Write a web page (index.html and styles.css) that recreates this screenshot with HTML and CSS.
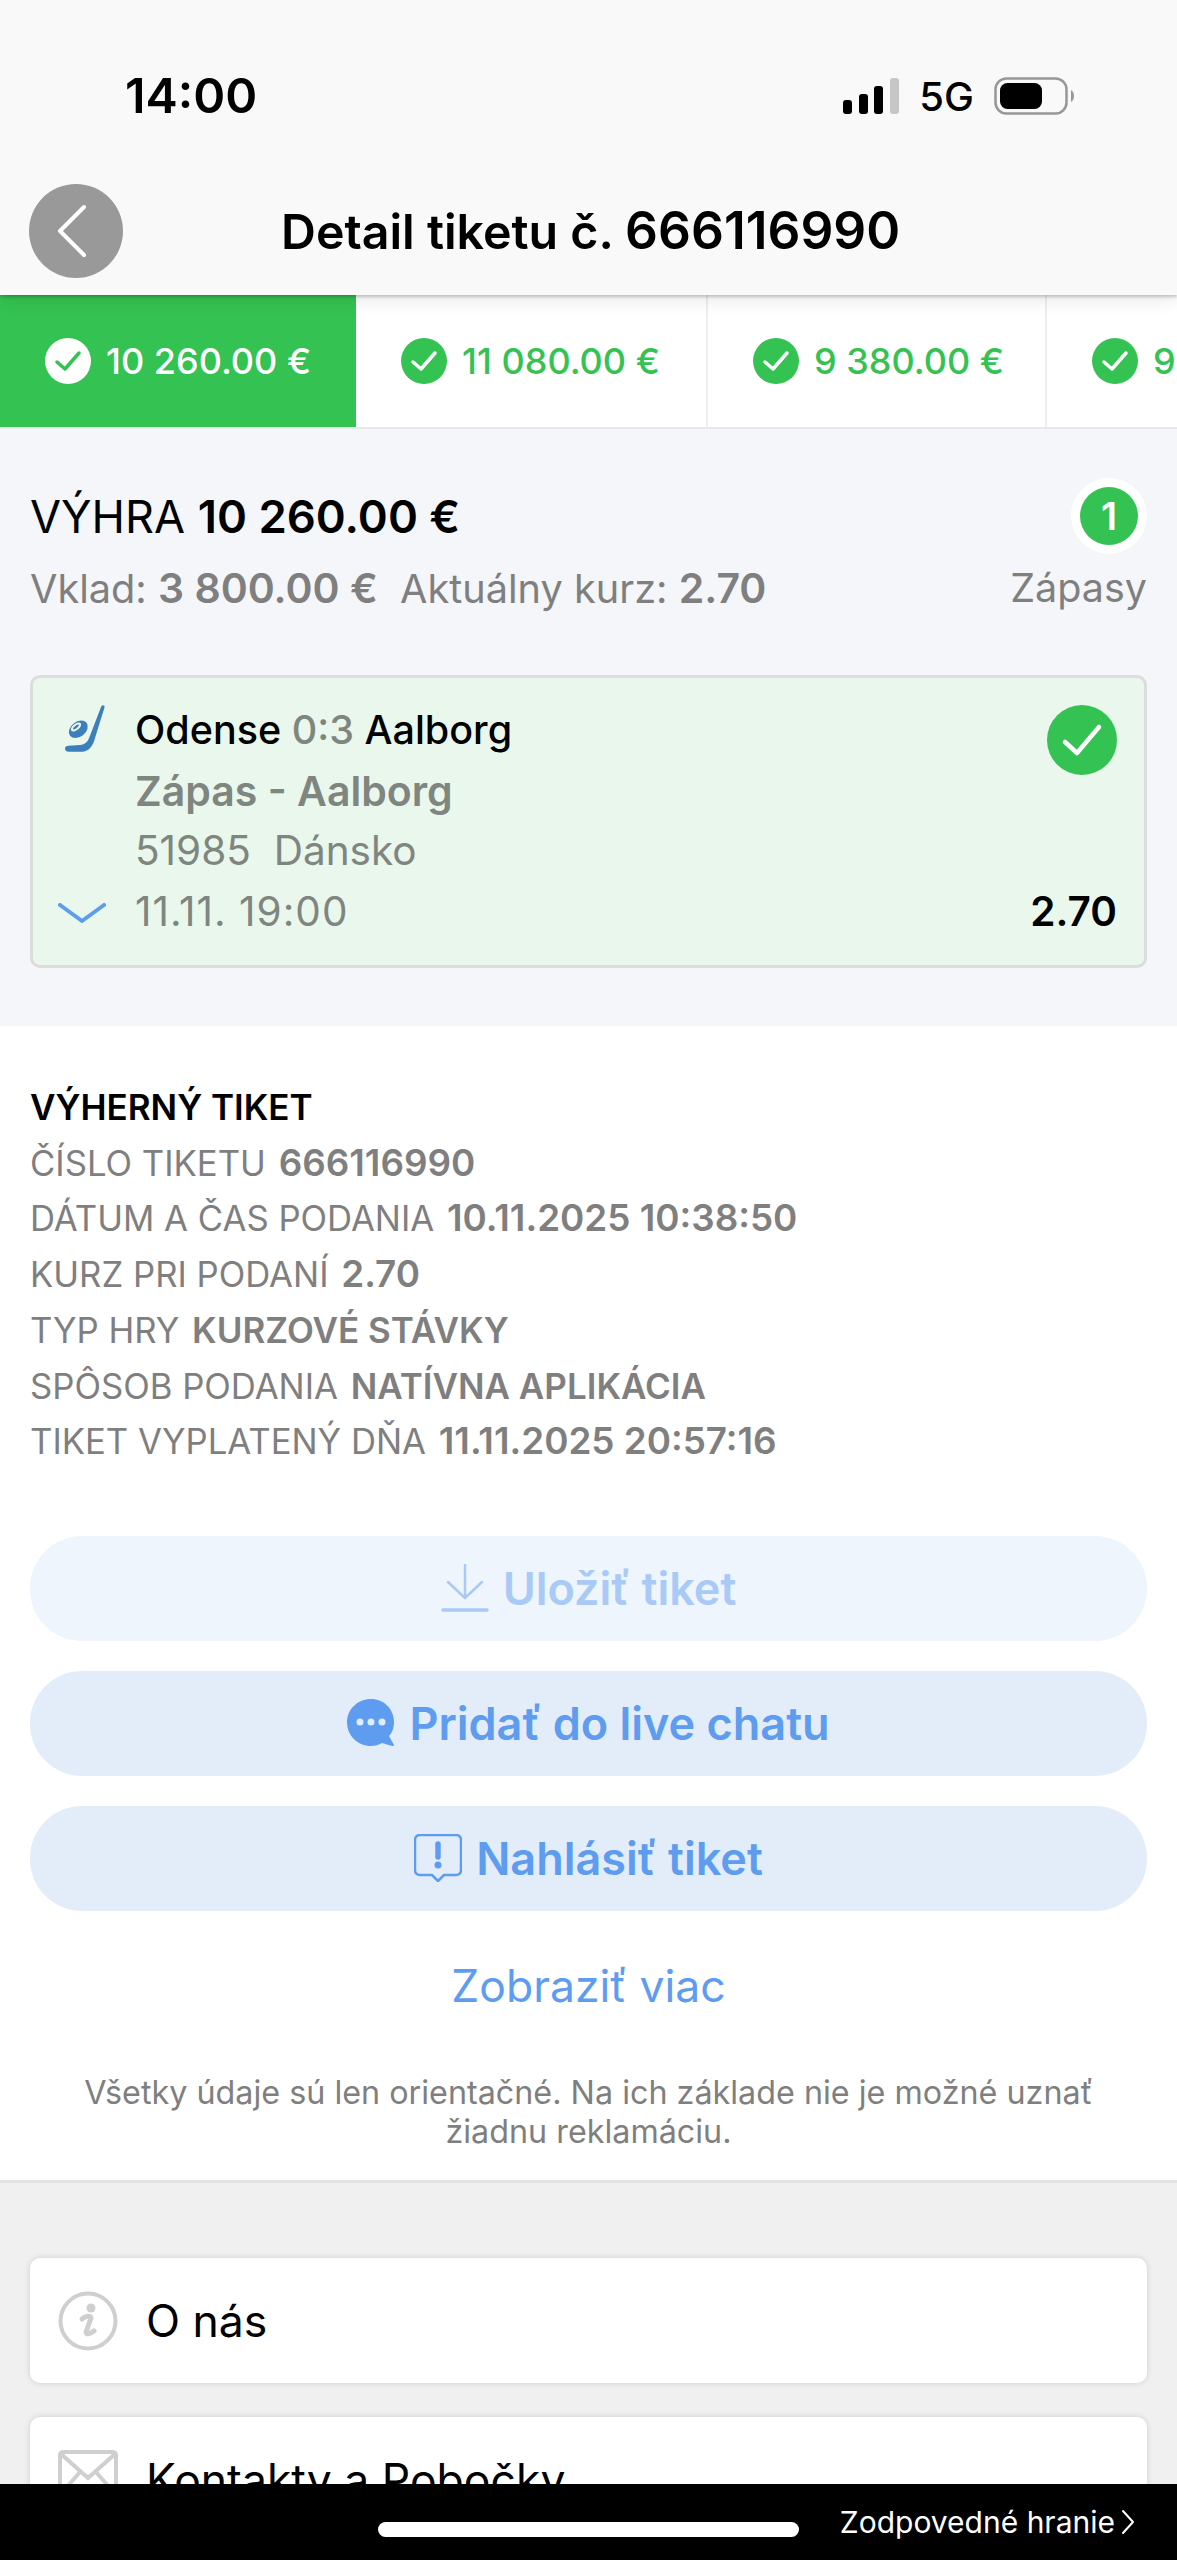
FILE: index.html
```html
<!DOCTYPE html>
<html lang="sk">
<head>
    <meta charset="UTF-8">
    <meta name="viewport" content="width=device-width, initial-scale=1.0">
    <title>Detail tiketu</title>
    <link rel="stylesheet" href="styles.css">
</head>
<body>
    <header class="top">
        <div class="status">
            <span class="time">14:00</span>
            <div class="status-right">
                <svg class="signal" width="56" height="36" viewBox="0 0 56 36">
                    <rect x="0" y="22" width="9" height="14" rx="3" fill="#000"/>
                    <rect x="16" y="16" width="9" height="20" rx="3" fill="#000"/>
                    <rect x="31" y="8" width="9" height="28" rx="3" fill="#000"/>
                    <rect x="47" y="0" width="9" height="36" rx="3" fill="#c6c6c6"/>
                </svg>
                <span class="net">5G</span>
                <svg class="battery" width="82" height="38" viewBox="0 0 82 38">
                    <rect x="1.5" y="1.5" width="71" height="35" rx="11" fill="none" stroke="#979797" stroke-width="2.5"/>
                    <rect x="6" y="6" width="42" height="26" rx="7.5" fill="#000"/>
                    <path d="M77 13 C81 15 81 23 77 25 Z" fill="#979797"/>
                </svg>
            </div>
        </div>
        <div class="nav">
            <button class="back">
                <svg width="94" height="94" viewBox="0 0 94 94"><path d="M55 23 L31 47 L55 71" fill="none" stroke="#fff" stroke-width="4" stroke-linecap="round" stroke-linejoin="round"/></svg>
            </button>
            <h1>Detail tiketu č. <span class="ticket-no">666116990</span></h1>
        </div>
    </header>

    <nav class="tabs">
        <div class="tab tab-active" style="width:356px">
            <svg class="tab-check" width="46" height="46" viewBox="0 0 46 46"><circle cx="23" cy="23" r="23" fill="#fff"/><path d="M12 24 L20 31 L34 15" fill="none" stroke="#34c252" stroke-width="3.5" stroke-linecap="round" stroke-linejoin="round"/></svg>
            <span>10 260.00 €</span>
        </div>
        <div class="tab" style="width:352px">
            <svg class="tab-check" width="46" height="46" viewBox="0 0 46 46"><circle cx="23" cy="23" r="23" fill="#34c252"/><path d="M12 24 L20 31 L34 15" fill="none" stroke="#fff" stroke-width="3.5" stroke-linecap="round" stroke-linejoin="round"/></svg>
            <span>11 080.00 €</span>
        </div>
        <div class="tab" style="width:339px">
            <svg class="tab-check" width="46" height="46" viewBox="0 0 46 46"><circle cx="23" cy="23" r="23" fill="#34c252"/><path d="M12 24 L20 31 L34 15" fill="none" stroke="#fff" stroke-width="3.5" stroke-linecap="round" stroke-linejoin="round"/></svg>
            <span>9 380.00 €</span>
        </div>
        <div class="tab" style="width:339px">
            <svg class="tab-check" width="46" height="46" viewBox="0 0 46 46"><circle cx="23" cy="23" r="23" fill="#34c252"/><path d="M12 24 L20 31 L34 15" fill="none" stroke="#fff" stroke-width="3.5" stroke-linecap="round" stroke-linejoin="round"/></svg>
            <span>9 380.00 €</span>
        </div>
    </nav>

    <section class="summary">
        <div class="win-row">
            <div>
                <div class="win">VÝHRA <b>10 260.00 €</b></div>
                <div class="stake">Vklad: <b>3 800.00 €</b>&nbsp; Aktuálny kurz: <b>2.70</b></div>
            </div>
            <div class="matches">
                <span class="count">1</span>
                <span>Zápasy</span>
            </div>
        </div>

        <div class="match">
            <div class="match-icons">
                <svg class="stick" width="40" height="47" viewBox="0 0 40 47">
                    <path d="M37 0.5 C38.5 0 40 1 39.5 2.5 L30 33 C28 41 24 46.5 17 46.7 L4 46.7 C1 46.7 0 45 0 43.5 C0 41.5 1.5 41 3.5 40.8 L15 40 C20 39.5 23 36.5 24.5 32 L36 2 Z" fill="#3d7fbc"/>
                    <ellipse cx="13.3" cy="24.3" rx="10.5" ry="7.5" transform="rotate(-38 13.3 24.3)" fill="#3d7fbc"/>
                    <ellipse cx="11" cy="22" rx="6" ry="3.2" transform="rotate(-38 11 22)" fill="#eaf7ed"/>
                    <ellipse cx="11" cy="22" rx="3.5" ry="1.2" transform="rotate(-38 11 22)" fill="#3d7fbc"/>
                </svg>
                <svg width="48" height="20" viewBox="0 0 48 20"><path d="M2 2 L24 18 L46 2" fill="none" stroke="#5e9cf0" stroke-width="4" stroke-linecap="round" stroke-linejoin="round"/></svg>
            </div>
            <div class="match-body">
                <div class="teams">Odense <span class="score">0:3</span> Aalborg</div>
                <div class="pick">Zápas - Aalborg</div>
                <div class="meta">51985&nbsp; Dánsko</div>
                <div class="meta meta-date">11.11. 19:00</div>
            </div>
            <div class="match-side">
                <svg width="70" height="70" viewBox="0 0 70 70"><circle cx="35" cy="35" r="35" fill="#34c252"/><path d="M18 37 L30 48 L52 22" fill="none" stroke="#fff" stroke-width="4.5" stroke-linecap="round" stroke-linejoin="round"/></svg>
                <div class="odds">2.70</div>
            </div>
        </div>
    </section>

    <section class="details">
        <div class="info">
            <div class="info-title">VÝHERNÝ TIKET</div>
            <div>ČÍSLO TIKETU <b>666116990</b></div>
            <div>DÁTUM A ČAS PODANIA <b>10.11.2025 10:38:50</b></div>
            <div>KURZ PRI PODANÍ <b>2.70</b></div>
            <div>TYP HRY <b class="caps">KURZOVÉ STÁVKY</b></div>
            <div>SPÔSOB PODANIA <b class="caps">NATÍVNA APLIKÁCIA</b></div>
            <div>TIKET VYPLATENÝ DŇA <b>11.11.2025 20:57:16</b></div>
        </div>

        <div class="actions">
            <button class="action action-off">
                <svg width="48" height="48" viewBox="0 0 48 48"><path d="M24 1 V33 M7 18 L24 34 L41 18" fill="none" stroke="#a9caf6" stroke-width="2.5" stroke-linecap="round" stroke-linejoin="round"/><path d="M2 46 H46" stroke="#a9caf6" stroke-width="3.5" stroke-linecap="round"/></svg>
                Uložiť tiket
            </button>
            <button class="action">
                <svg width="48" height="48" viewBox="0 0 48 48"><path d="M24 0 C37 0 47 10 47 23 C47 29 45 34 42 37 L47 46 C47 47 46 47 45 47 L35 44 C32 46 28 47 24 47 C11 47 0 37 0 23 C0 10 11 0 24 0 Z" fill="#5e9cf0"/><circle cx="13" cy="23" r="3.5" fill="#e3edfa"/><circle cx="24" cy="23" r="3.5" fill="#e3edfa"/><circle cx="35" cy="23" r="3.5" fill="#e3edfa"/></svg>
                Pridať do live chatu
            </button>
            <button class="action">
                <svg width="48" height="48" viewBox="0 0 48 48"><path d="M6 1 H42 C45 1 47 3 47 6 V36 C47 39 45 41 42 41 H30 L24 47 L18 41 H6 C3 41 1 39 1 36 V6 C1 3 3 1 6 1 Z" fill="none" stroke="#5e9cf0" stroke-width="2.5" stroke-linejoin="round"/><path d="M24 10 V23" stroke="#5e9cf0" stroke-width="5.5" stroke-linecap="round"/><circle cx="24" cy="31" r="3.5" fill="#5e9cf0"/></svg>
                Nahlásiť tiket
            </button>
        </div>

        <div class="more">Zobraziť viac</div>
        <p class="note">Všetky údaje sú len orientačné. Na ich základe nie je možné uznať žiadnu reklamáciu.</p>
    </section>

    <section class="menu">
        <div class="menu-row">
            <svg width="60" height="60" viewBox="0 0 60 60"><circle cx="30" cy="30" r="27.5" fill="none" stroke="#cfcfcf" stroke-width="4"/><circle cx="33" cy="17" r="4.5" fill="#cfcfcf"/><path d="M24 28 C27 25 33 24 33 27 L28 41 C28 44 32 43 36 40" fill="none" stroke="#cfcfcf" stroke-width="5" stroke-linecap="round" stroke-linejoin="round"/></svg>
            <span>O nás</span>
        </div>
        <div class="menu-row">
            <svg width="60" height="60" viewBox="0 0 60 60"><rect x="2" y="2" width="56" height="44" rx="3" fill="none" stroke="#cfcfcf" stroke-width="4"/><path d="M3 4 L30 28 L57 4 M3 44 L22 22 M57 44 L38 22" fill="none" stroke="#cfcfcf" stroke-width="4"/></svg>
            <span>Kontakty a Pobočky</span>
        </div>
    </section>

    <footer class="bottom">
        <div class="home-bar"></div>
        <div class="responsible">Zodpovedné hranie
            <svg width="14" height="26" viewBox="0 0 14 26"><path d="M2 2 L12 13 L2 24" fill="none" stroke="#fff" stroke-width="2" stroke-linecap="round" stroke-linejoin="round"/></svg>
        </div>
    </footer>
</body>
</html>
```

FILE: styles.css
```css
* {
    box-sizing: border-box;
}

html, body {
    height: 2560px;
    overflow: hidden;
}

body {
    margin: 0;
    padding: 0;
    font-family: Inter, "Liberation Sans", sans-serif;
    background-color: #f0f0f0;
    color: #000;
}

b {
    font-weight: 600;
}

/* header */
.top {
    height: 295px;
    background-color: #f9f9f9;
    box-shadow: 0 2px 3px rgba(0, 0, 0, 0.2), 0 4px 18px rgba(0, 0, 0, 0.1);
    position: relative;
    z-index: 2;
}

.status {
    height: 183px;
    padding: 65px 101px 0 125px;
    display: flex;
    justify-content: space-between;
    align-items: flex-start;
}

.time {
    font-size: 48.5px;
    font-weight: 600;
    line-height: 62px;
}

.status-right {
    display: flex;
    align-items: center;
    gap: 20px;
    height: 62px;
}

.net {
    font-size: 40px;
    font-weight: 500;
}

.nav {
    display: flex;
    align-items: center;
    padding-left: 29px;
    position: relative;
}

.back {
    width: 94px;
    height: 94px;
    border-radius: 50%;
    border: none;
    padding: 0;
    background-color: #999;
    display: block;
}

.back svg {
    display: block;
}

h1 {
    font-size: 48.3px;
    font-weight: 600;
    margin: 0 0 0 158px;
    line-height: 94px;
    white-space: nowrap;
}

.ticket-no {
    font-size: 51.5px;
}

/* tabs */
.tabs {
    display: flex;
    height: 134px;
    background-color: #fff;
    border-bottom: 2px solid #e6e8ec;
    overflow: hidden;
}

.tab {
    flex: none;
    display: flex;
    align-items: center;
    gap: 15px;
    padding-left: 45px;
    border-right: 2px solid #eceef1;
    color: #34c252;
    font-size: 36px;
    font-weight: 500;
    white-space: nowrap;
}

.tab-active {
    background-color: #34c252;
    color: #fff;
    border-right: none;
}

.tab-check {
    flex: none;
}

/* summary */
.summary {
    height: 597px;
    background-color: #f4f6fa;
    padding: 53px 30px 0;
}

.win-row {
    display: flex;
    justify-content: space-between;
    height: 193px;
}

.win {
    font-size: 45px;
    line-height: 70px;
}

.win b {
    font-size: 45.5px;
}

.stake {
    font-size: 39.7px;
    line-height: 60px;
    margin-top: 6px;
    color: #7f7f7f;
}

.stake b {
    font-size: 41px;
}

.matches {
    display: flex;
    flex-direction: column;
    align-items: flex-end;
    font-size: 39.5px;
    color: #7f7f7f;
    line-height: 60px;
}

.count {
    width: 58px;
    height: 58px;
    margin: 5px 9px 13px 0;
    border-radius: 50%;
    background-color: #34c252;
    box-shadow: 0 0 0 9px #fff;
    color: #fff;
    font-size: 38px;
    font-weight: 600;
    text-align: center;
    line-height: 58px;
}

.match {
    height: 293px;
    background-color: #eaf7ed;
    border: 3px solid #dcdcdc;
    border-radius: 10px;
    display: flex;
    padding: 27px 27px 0 25px;
}

.match-icons {
    width: 76px;
    height: 218px;
    flex: none;
    display: flex;
    flex-direction: column;
    justify-content: space-between;
    align-items: flex-start;
}

.match-icons svg {
    display: block;
}

.match-icons .stick {
    margin-left: 7px;
}

.match-body {
    flex: 1;
    font-size: 40.5px;
    line-height: 60.5px;
    margin-top: -5px;
    margin-left: 1px;
}

.teams {
    font-size: 39.5px;
    font-weight: 500;
}

.score {
    color: #7f857f;
}

.pick {
    font-size: 41px;
    font-weight: 600;
    color: #7f857f;
}

.meta {
    color: #7f857f;
}

.meta-date {
    letter-spacing: 1px;
}

.match-side {
    display: flex;
    flex-direction: column;
    justify-content: space-between;
    align-items: flex-end;
    height: 237px;
}

.odds {
    font-size: 40.5px;
    font-weight: 600;
    line-height: 61px;
}

/* details */
.details {
    height: 1157px;
    background-color: #fff;
    border-bottom: 3px solid #e4e4e4;
    padding: 54px 30px 0;
}

.info {
    font-size: 34.7px;
    line-height: 55.7px;
    color: #7f7f7f;
}

.info b {
    font-size: 36.8px;
    line-height: 1;
    margin-left: 3px;
}

.info b.caps {
    font-size: 35px;
}

.info-title {
    color: #000;
    font-size: 35px;
    font-weight: 600;
}

.actions {
    margin-top: 66px;
    display: flex;
    flex-direction: column;
    gap: 30px;
}

.action {
    height: 105px;
    border: none;
    border-radius: 52px;
    background-color: #e3edfa;
    color: #5e9cf0;
    font-family: inherit;
    font-size: 45px;
    font-weight: 600;
    display: flex;
    align-items: center;
    justify-content: center;
    gap: 14px;
}

.action-off {
    background-color: #eff5fd;
    color: #a9caf6;
}

.more {
    margin-top: 45px;
    text-align: center;
    color: #5e9cf0;
    font-size: 44.5px;
    line-height: 60px;
}

.note {
    margin: 57px 40px 0;
    text-align: center;
    color: #7f7f7f;
    font-size: 32.3px;
    line-height: 39px;
}

/* menu */
.menu {
    padding: 75px 30px 0;
    display: flex;
    flex-direction: column;
    gap: 34px;
}

.menu-row {
    height: 125px;
    flex: none;
    background-color: #fff;
    border-radius: 10px;
    box-shadow: 0 0 6px rgba(0, 0, 0, 0.14);
    display: flex;
    align-items: center;
    gap: 28px;
    padding-left: 28px;
    font-size: 44.5px;
}

/* black bar over the page */
.bottom {
    position: fixed;
    left: 0;
    right: 0;
    bottom: 0;
    height: 76px;
    background-color: #000;
}

.home-bar {
    position: absolute;
    left: 378px;
    top: 38px;
    width: 421px;
    height: 15px;
    border-radius: 8px;
    background-color: #fff;
}

.responsible {
    position: absolute;
    right: 42px;
    top: 20px;
    color: #fff;
    font-size: 30px;
    line-height: 36px;
    display: flex;
    align-items: center;
    gap: 6px;
}
```
